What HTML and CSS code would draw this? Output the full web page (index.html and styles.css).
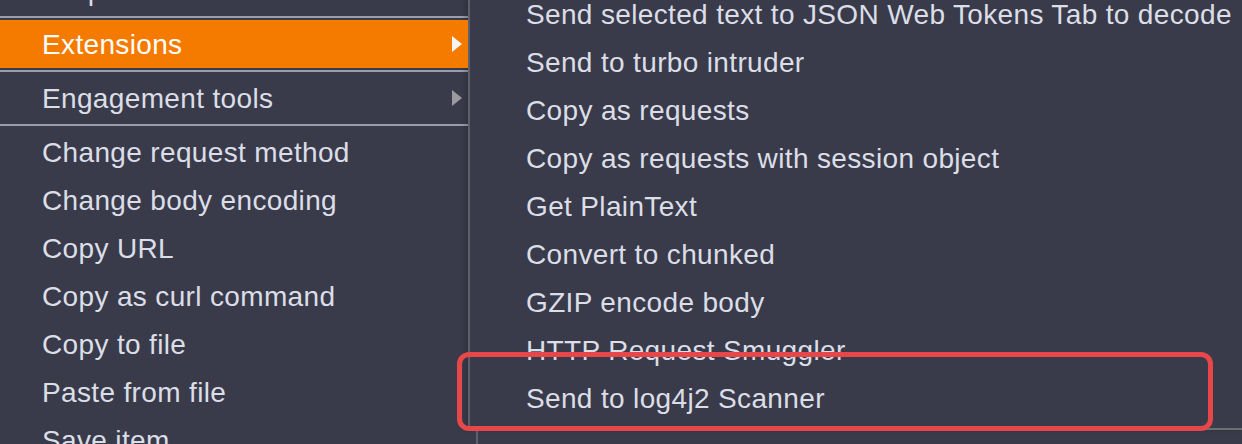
FILE: index.html
```html
<!DOCTYPE html>
<html>
<head>
<meta charset="utf-8">
<link rel="stylesheet" href="styles.css">
</head>
<body>
<div class="screen">
  <div class="menu">
    <div class="item first">Request in browser<span class="arrow"></span></div>
    <div class="sep"></div>
    <div class="item active">Extensions<span class="arrow"></span></div>
    <div class="sep"></div>
    <div class="item">Engagement tools<span class="arrow"></span></div>
    <div class="sep"></div>
    <div class="item">Change request method</div>
    <div class="item">Change body encoding</div>
    <div class="item">Copy URL</div>
    <div class="item">Copy as curl command</div>
    <div class="item">Copy to file</div>
    <div class="item">Paste from file</div>
    <div class="item">Save item</div>
  </div>
  <div class="right">
    <div class="submenu">
      <div class="sub-items">
        <div class="sitem">Send selected text to JSON Web Tokens Tab to decode</div>
        <div class="sitem">Send to turbo intruder</div>
        <div class="sitem">Copy as requests</div>
        <div class="sitem">Copy as requests with session object</div>
        <div class="sitem">Get PlainText</div>
        <div class="sitem">Convert to chunked</div>
        <div class="sitem">GZIP encode body</div>
        <div class="sitem">HTTP Request Smuggler</div>
        <div class="sitem">Send to log4j2 Scanner</div>
      </div>
    </div>
    <div class="below"></div>
  </div>
  <div class="highlight-box"></div>
</div>
</body>
</html>
```

FILE: styles.css
```css
html, body {
  margin: 0;
  padding: 0;
  background: #393b4a;
  overflow: hidden;
}
.screen {
  position: relative;
  width: 1242px;
  height: 444px;
  display: flex;
  overflow: hidden;
  font-family: "Liberation Sans", Arial, sans-serif;
  font-size: 28px;
  letter-spacing: 0.35px;
  color: #dcdee7;
}
.menu {
  width: 468px;
  flex: none;
  margin-top: -34px;
  display: flex;
  flex-direction: column;
}
.item {
  height: 48px;
  line-height: 49px;
  padding-left: 42px;
  position: relative;
  white-space: nowrap;
  flex: none;
}
.item.first {
  line-height: 50px;
  overflow: hidden;
}
.item.active {
  background: #f57b00;
  color: #ffffff;
}
.arrow {
  position: absolute;
  right: 6px;
  top: 16px;
  width: 0;
  height: 0;
  border-top: 8px solid transparent;
  border-bottom: 8px solid transparent;
  border-left: 10px solid #9b9b9f;
}
.item.active .arrow {
  border-left-color: #f4f4f4;
}
.sep {
  height: 2px;
  margin: 2px 0;
  background: #9b9ea8;
  flex: none;
}
.right {
  flex: 1;
  display: flex;
  flex-direction: column;
}
.submenu {
  height: 428px;
  border-left: 2px solid #5d5f6a;
  border-bottom: 2px solid #6e6e70;
  box-shadow: -3px 0 5px rgba(0, 0, 0, 0.18);
  background: #393b4a;
  overflow: hidden;
  flex: none;
}
.sub-items {
  margin-top: -10px;
  padding-left: 56px;
}
.sitem {
  height: 48px;
  line-height: 49px;
  white-space: nowrap;
}
.below {
  flex: 1;
  margin-left: 8px;
  border-left: 2px solid #5d5f6a;
}
.highlight-box {
  position: absolute;
  left: 457px;
  top: 352px;
  width: 746px;
  height: 69px;
  border: 5px solid #e8474a;
  border-radius: 12px;
}
```
